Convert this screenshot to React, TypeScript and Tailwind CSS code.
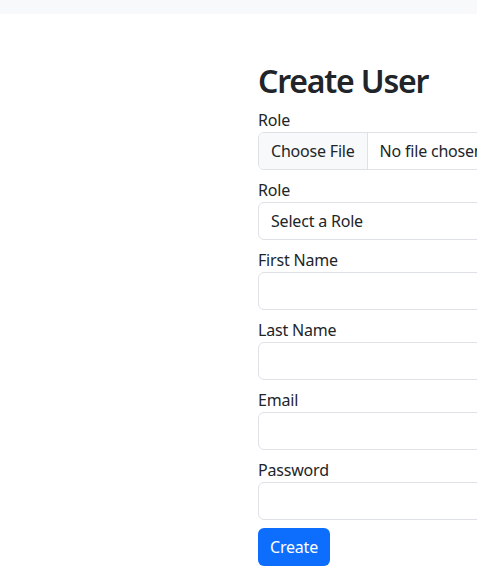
import React from "react";

const font = { fontFamily: '"Noto Sans", "Open Sans", sans-serif' };

const Field: React.FC<{ label: string; type?: string }> = ({ label, type = "text" }) => (
  <div className="mb-2">
    <label className="block text-base leading-6 text-[#212529]">{label}</label>
    <input
      type={type}
      className="block h-[38px] w-[420px] rounded-md border border-[#dee2e6] bg-white px-3 text-base text-[#212529] outline-none"
    />
  </div>
);

const App: React.FC = () => {
  return (
    <div className="min-h-screen w-screen overflow-hidden bg-white text-[#212529] tracking-[-0.2px]" style={font}>
      <div className="h-[14px] w-full bg-[#f8f9fa]" />
      <div className="mt-12 pl-[258px]">
        <h1 className="mb-2 text-[32px] font-semibold leading-[38px] tracking-[-1.2px]">Create User</h1>

        <div className="mb-2">
          <label className="block text-base leading-6">Role</label>
          <div className="flex h-[38px] w-[420px] overflow-hidden rounded-md border border-[#dee2e6] text-base">
            <span className="flex items-center whitespace-nowrap border-r border-[#dee2e6] bg-[#f8f9fa] px-3">
              Choose File
            </span>
            <span className="flex items-center whitespace-nowrap px-3">No file chosen</span>
          </div>
        </div>

        <div className="mb-2">
          <label className="block text-base leading-6">Role</label>
          <div className="flex h-[38px] w-[420px] items-center rounded-md border border-[#dee2e6] px-3 text-base">
            Select a Role
          </div>
        </div>

        <Field label="First Name" />
        <Field label="Last Name" />
        <Field label="Email" type="email" />
        <Field label="Password" type="password" />

        <button
          type="submit"
          className="h-[38px] rounded-md bg-[#0d6efd] px-3 text-base text-white"
        >
          Create
        </button>
      </div>
    </div>
  );
};

export default App;
